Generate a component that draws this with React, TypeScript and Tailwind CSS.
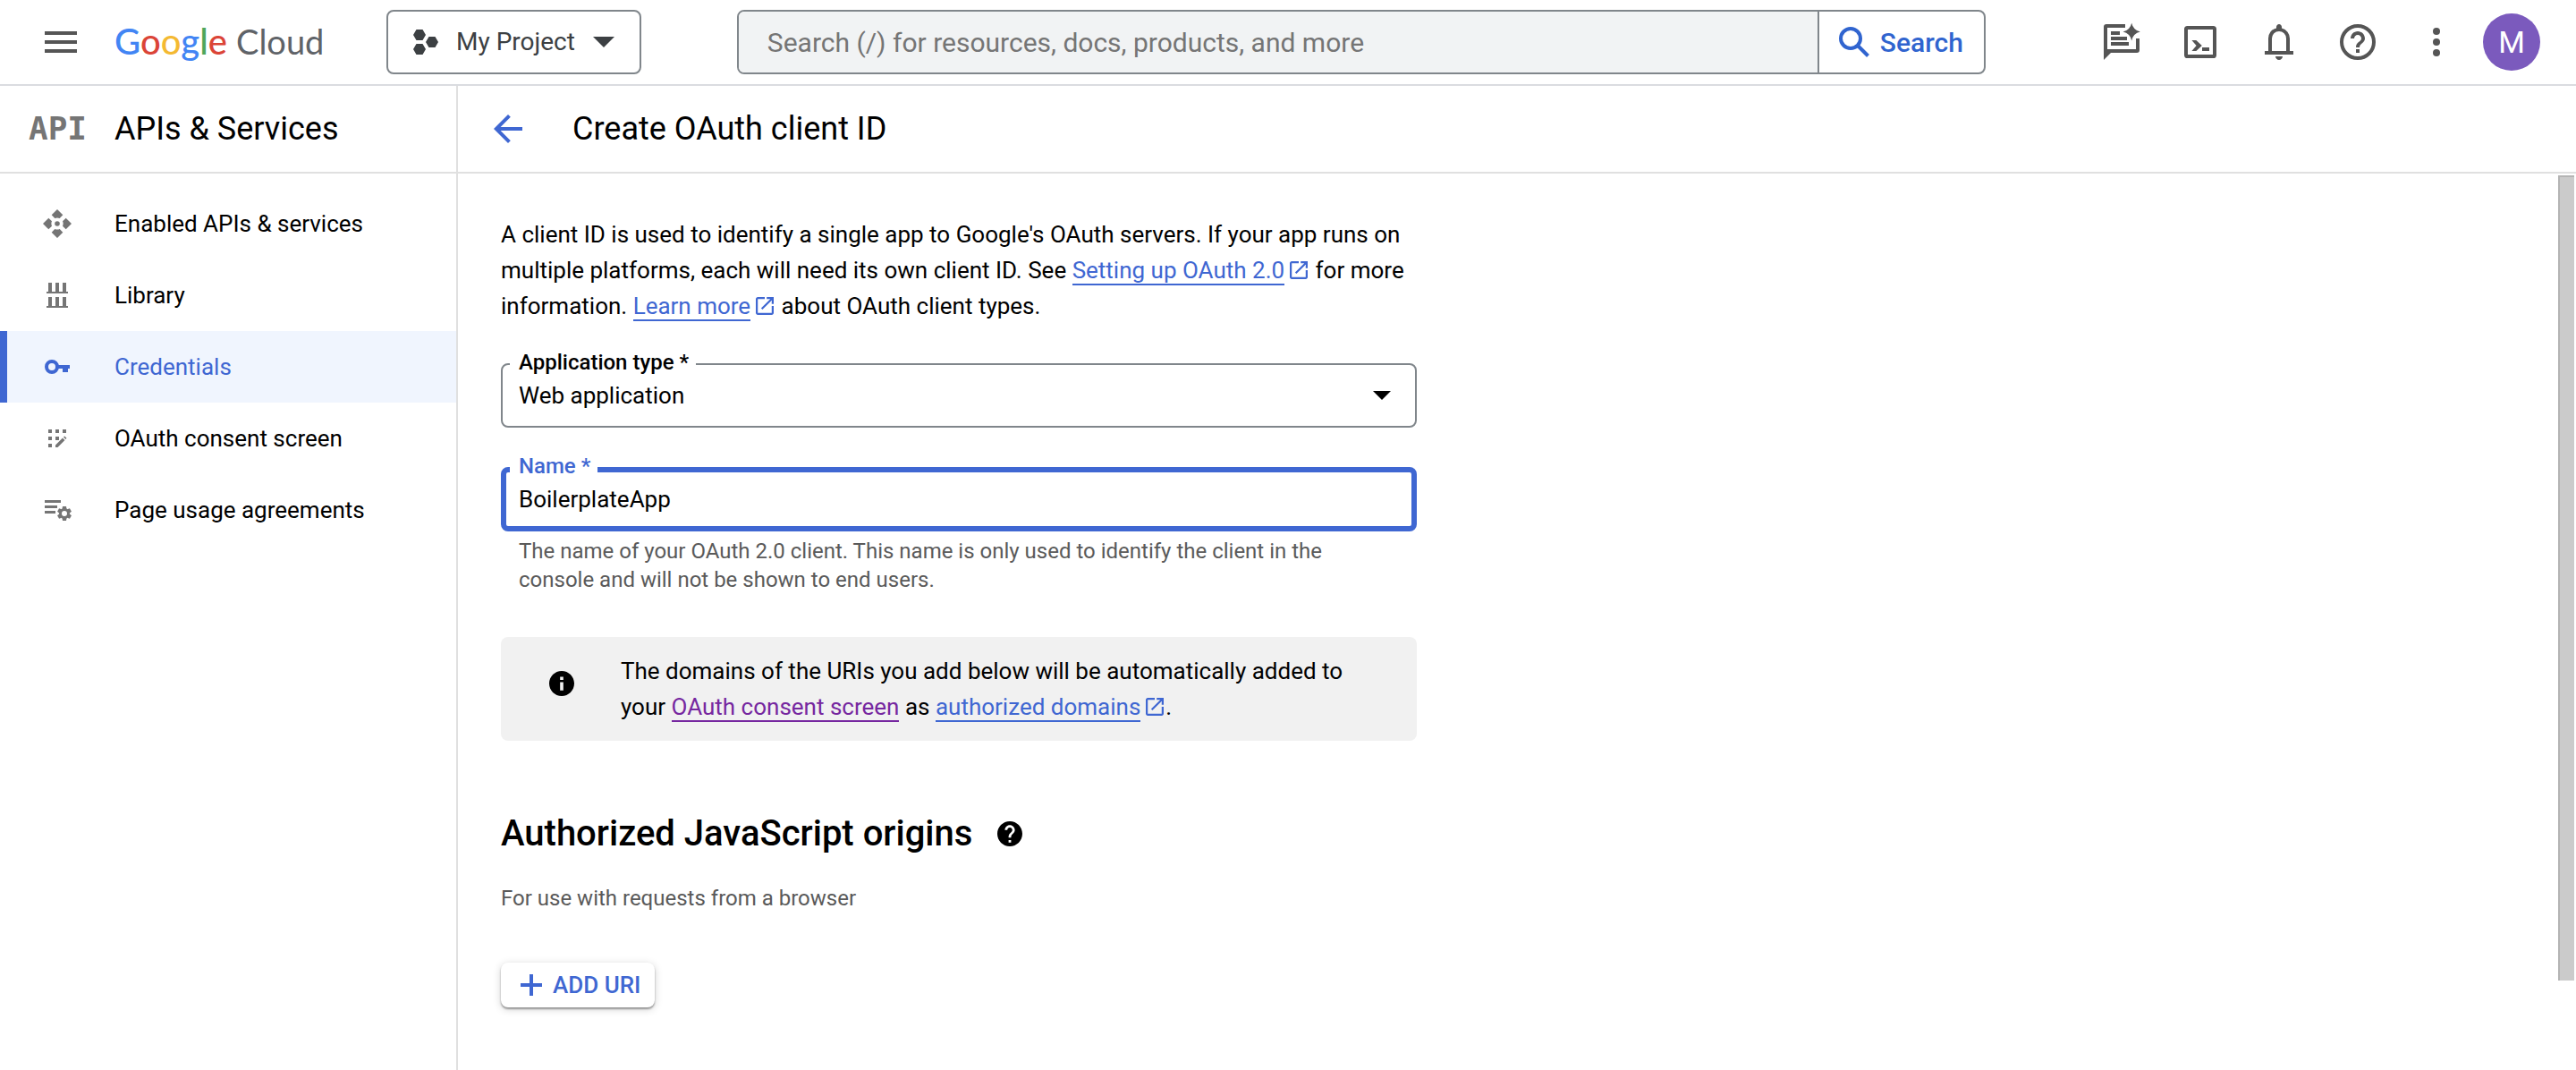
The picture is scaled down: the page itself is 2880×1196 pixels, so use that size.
import React from "react";

type IconProps = { className?: string };

const MenuIcon = () => (
  <svg viewBox="0 0 24 24" className="size-12" fill="currentColor" aria-hidden="true">
    <path d="M3 6h18v2H3zM3 11h18v2H3zM3 16h18v2H3z" />
  </svg>
);

const ProjectIcon = () => (
  <svg viewBox="0 0 28 28" className="size-7 shrink-0" fill="currentColor" aria-hidden="true">
    <path d="M3.5 0h7L14 6l-3.500 6h-7L0 6zM17.500 8h7L28 14l-3.500 6h-7L14 14zM3.500 16h7L14 22l-3.500 6h-7L0 22z" />
  </svg>
);

const CaretIcon = ({ className }: IconProps) => (
  <svg viewBox="0 0 20 10" className={className} fill="currentColor" preserveAspectRatio="none" aria-hidden="true">
    <path d="M0 0h20L10 10z" />
  </svg>
);

const SearchIcon = () => (
  <svg viewBox="0 0 34 34" className="size-[34px] shrink-0" fill="none" stroke="currentColor" strokeWidth="4" aria-hidden="true">
    <circle cx="13" cy="13" r="11" />
    <path d="M20.500 20.500 32.500 32.500" />
  </svg>
);

const FeedbackSparkIcon = () => (
  <svg viewBox="0 0 24 24" className="size-12" fill="currentColor" aria-hidden="true">
    <path d="M14 2H3.500A1.500 1.500 0 0 0 2 3.500V22l4-4h14.500a1.500 1.500 0 0 0 1.500-1.500V10h-2v6H4V4h10z" />
    <path d="M6 6h5v2H6zM6 9h9v2H6zM6 12h10v2H6z" />
    <path d="M17.600 1.400 Q18.500 5.400 22.400 6.300 Q18.500 7.200 17.600 11.200 Q16.700 7.200 12.800 6.300 Q16.700 5.400 17.600 1.400z" />
  </svg>
);

const TerminalIcon = () => (
  <svg viewBox="0 0 24 24" className="size-12" fill="currentColor" aria-hidden="true">
    <rect x="4" y="4" width="16" height="16" rx="0.800" fill="none" stroke="currentColor" strokeWidth="2" />
    <path d="M7.200 11h2.500l3.200 3-3.200 3H7.200l2.600-3zM13 15h4v2h-4z" />
  </svg>
);

const BellIcon = () => (
  <svg viewBox="0 0 24 24" className="size-12" fill="currentColor" aria-hidden="true">
    <path d="M4 19v-2h2v-7q0-2.075 1.250-3.688T10.500 4.200v-.7q0-.625.438-1.062T12 2q.625 0 1.063.438T13.500 3.500v.7q2 .5 3.250 2.113T18 10v7h2v2Zm8 3q-.825 0-1.412-.587T10 20h4q0 .825-.587 1.413T12 22Zm-4-5h8v-7q0-1.650-1.175-2.825T12 6Q10.350 6 9.175 7.175T8 10Z" />
  </svg>
);

const HelpOutlineIcon = () => (
  <svg viewBox="0 0 24 24" className="size-12" fill="currentColor" aria-hidden="true">
    <circle cx="12" cy="12" r="9" fill="none" stroke="currentColor" strokeWidth="2" />
    <path d="M11 16h2v2h-2zM12 6c-2.210 0-4 1.790-4 4h2c0-1.100.9-2 2-2s2 .9 2 2c0 2-3 1.750-3 5h2c0-2.250 3-2.500 3-5 0-2.210-1.790-4-4-4z" />
  </svg>
);

const MoreIcon = () => (
  <svg viewBox="0 0 24 24" className="size-12" fill="currentColor" aria-hidden="true">
    <circle cx="12" cy="6" r="2" />
    <circle cx="12" cy="12" r="2" />
    <circle cx="12" cy="18" r="2" />
  </svg>
);

const BackIcon = () => (
  <svg viewBox="0 0 24 24" className="size-12" fill="currentColor" aria-hidden="true">
    <path d="M20 11H7.830l5.590-5.590L12 4l-8 8 8 8 1.410-1.410L7.830 13H20v-2z" />
  </svg>
);

const ExternalIcon = () => (
  <svg viewBox="3 3 18 18" className="ml-1.5 mr-0.5 inline-block size-5 align-[-1px] text-[#3f67d2]" fill="currentColor" aria-hidden="true">
    <path d="M5 21q-.825 0-1.413-.587T3 19V5q0-.825.588-1.413T5 3h7v2H5v14h14v-7h2v7q0 .825-.587 1.413T19 21H5Zm4.700-5.300l-1.400-1.400L17.600 5H14V3h7v7h-2V6.400l-9.300 9.300Z" />
  </svg>
);

const InfoIcon = () => (
  <svg viewBox="2 2 20 20" className="size-7 shrink-0" fill="currentColor" aria-hidden="true">
    <path d="M12 2C6.480 2 2 6.480 2 12s4.480 10 10 10 10-4.480 10-10S17.520 2 12 2zm1.300 15.500h-2.600V11h2.600v6.500zm0-8.300h-2.600V6.600h2.600v2.600z" />
  </svg>
);

const HelpFilledIcon = () => (
  <svg viewBox="2 2 20 20" className="size-7" fill="currentColor" aria-hidden="true">
    <path d="M12 2C6.480 2 2 6.480 2 12s4.480 10 10 10 10-4.480 10-10S17.520 2 12 2zm1 17h-2v-2h2v2zm2.070-7.750l-.9.920C13.450 12.900 13 13.500 13 15h-2v-.5c0-1.100.450-2.100 1.170-2.830l1.240-1.260c.370-.360.590-.860.590-1.410 0-1.100-.9-2-2-2s-2 .9-2 2H8c0-2.210 1.790-4 4-4s4 1.790 4 4c0 .880-.360 1.680-.930 2.250z" />
  </svg>
);

const PlusIcon = () => (
  <svg viewBox="0 0 24 24" className="size-6 shrink-0" fill="currentColor" aria-hidden="true">
    <path d="M10 0h4v10h10v4H14v10h-4V14H0v-4h10z" />
  </svg>
);

const EnabledApisIcon = () => (
  <svg viewBox="0 0 32 32" className="size-8" fill="currentColor" aria-hidden="true">
    {[0, 90, 180, 270].map((angle) => (
      <path key={angle} transform={`rotate(${angle} 16 16)`} d="M16 0l6.300 6.300-3.600 3.700a6.500 6.500 0 0 0-5.400 0L9.700 6.300z" />
    ))}
    <circle cx="16" cy="16" r="2.800" />
  </svg>
);

const LibraryIcon = () => (
  <svg viewBox="0 0 32 32" className="size-8" fill="currentColor" aria-hidden="true">
    <path d="M6 2h4v10h4V2h4v10h4V2h4v10h2v2H4v-2h2zM6 18h4v10h4V18h4v10h4V18h4v10h2v2H4v-2h2z" />
  </svg>
);

const KeyIcon = () => (
  <svg viewBox="0 0 32 32" className="size-8" fill="currentColor" aria-hidden="true">
    <circle cx="10" cy="16" r="6" fill="none" stroke="currentColor" strokeWidth="4" />
    <path d="M17 14h13v4h-2v4h-6v-4h-5z" />
  </svg>
);

const ConsentIcon = () => (
  <svg viewBox="0 0 32 32" className="size-8" fill="currentColor" aria-hidden="true">
    <path d="M6 6h4v4H6zM14 6h4v4h-4zM22 6h4v4h-4zM6 14h4v4H6zM14 14h4v4h-4zM6 22h4v4H6z" />
    <path d="M14 26v-2.500l8-8 2.500 2.500-8 8zM23 14.600l1.200-1.100 2.300 2.300-1.200 1.200z" />
  </svg>
);

const AgreementsIcon = () => (
  <svg viewBox="0 0 32 32" className="size-8" fill="currentColor" aria-hidden="true">
    <path d="M2 5h18v3H2zM2 11h14v3H2zM2 17h12v3H2z" />
    <circle cx="24" cy="20" r="4.500" fill="none" stroke="currentColor" strokeWidth="3" />
    {[0, 60, 120, 180, 240, 300].map((angle) => (
      <path key={angle} transform={`rotate(${angle} 24 20)`} d="M22 12h4l.5 3h-5z" />
    ))}
  </svg>
);

const navItems = [
  { label: "Enabled APIs & services", Icon: EnabledApisIcon },
  { label: "Library", Icon: LibraryIcon },
  { label: "Credentials", Icon: KeyIcon, active: true },
  { label: "OAuth consent screen", Icon: ConsentIcon },
  { label: "Page usage agreements", Icon: AgreementsIcon },
];

const tools = [
  { label: "Send feedback", Icon: FeedbackSparkIcon },
  { label: "Activate Cloud Shell", Icon: TerminalIcon },
  { label: "Notifications", Icon: BellIcon },
  { label: "Support", Icon: HelpOutlineIcon },
  { label: "More options", Icon: MoreIcon },
];

function Logo() {
  return (
    <a href="#" aria-label="Google Cloud" className="ml-9 flex w-[236px] items-baseline gap-2.5 whitespace-nowrap pb-0.5 font-['Lato'] text-[40px] leading-12">
      <span className="font-medium">
        <span className="text-[#4285f4]">G</span>
        <span className="text-[#db4437]">o</span>
        <span className="text-[#f4b932]">o</span>
        <span className="text-[#4285f4]">g</span>
        <span className="text-[#4fa65a]">l</span>
        <span className="text-[#db4437]">e</span>
      </span>
      <span className="text-[38px] text-[#5f6368]">Cloud</span>
    </a>
  );
}

function Header() {
  return (
    <header className="flex h-24 items-center border-b-2 border-[#dadce0] pl-11 pr-10 text-[#555]">
      <button aria-label="Main menu"><MenuIcon /></button>
      <Logo />
      <button className="ml-[68px] flex h-[72px] items-center rounded-lg border-2 border-[#80868b] px-7 text-[28px] text-[#3c4043]">
        <ProjectIcon />
        <span className="ml-5 mr-5 whitespace-nowrap">My Project</span>
        <CaretIcon className="h-3 w-6" />
      </button>
      <form className="ml-[107px] flex h-[72px] w-[1396px] overflow-hidden rounded-lg border-2 border-[#80868b]">
        <input
          aria-label="Search"
          placeholder="Search (/) for resources, docs, products, and more"
          className="min-w-0 flex-1 bg-[#f1f3f4] px-8 text-[30px] outline-none placeholder:text-[#757575]"
        />
        <button type="button" className="flex w-[186px] items-center gap-3 border-l-2 border-[#80868b] pl-[22px] text-[30px] font-medium text-[#3064cf]">
          <SearchIcon />
          Search
        </button>
      </form>
      <div className="ml-auto flex items-center gap-10">
        {tools.map(({ label, Icon }) => (
          <button key={label} aria-label={label}><Icon /></button>
        ))}
      </div>
      <button aria-label="Account" className="ml-7 size-16 rounded-full bg-[#7b5abd] text-[34px] text-white">M</button>
    </header>
  );
}

function Sidebar() {
  return (
    <aside className="w-[512px] shrink-0 border-r-2 border-[#e0e0e0]">
      <div className="flex h-[98px] items-center border-b-2 border-[#e0e0e0]">
        <div aria-hidden="true" className="ml-8 w-24 font-['DejaVu_Sans_Mono'] text-4xl font-bold text-[#757575]">API</div>
        <h2 className="text-4xl">APIs &amp; Services</h2>
      </div>
      <nav className="pt-4">
        {navItems.map(({ label, Icon, active }) => (
          <a
            key={label}
            href="#"
            aria-current={active ? "page" : undefined}
            className={
              active
                ? "flex h-20 items-center gap-12 border-l-8 border-[#3f67d2] bg-[#f0f5fe] pl-10 text-[#3f67d2]"
                : "flex h-20 items-center gap-12 pl-12 text-black"
            }
          >
            <span className={active ? "" : "text-[#757575]"}><Icon /></span>
            {label}
          </a>
        ))}
      </nav>
    </aside>
  );
}

function TextLink({ children, visited }: { children: React.ReactNode; visited?: boolean }) {
  return (
    <a href="#" className={visited ? "border-b-2 border-[#7627a0] text-[#7627a0]" : "border-b-2 border-[#3f67d2] text-[#3f67d2]"}>
      {children}
    </a>
  );
}

function ClientForm() {
  return (
    <div className="w-full max-w-[1024px]">
      <p className="leading-10">
        A client ID is used to identify a single app to Google's OAuth servers. If your app runs on multiple
        platforms, each will need its own client ID. See <TextLink>Setting up OAuth 2.0</TextLink>
        <ExternalIcon /> for more information. <TextLink>Learn more</TextLink>
        <ExternalIcon /> about OAuth client types.
      </p>

      <div className="relative mt-11">
        <label htmlFor="app-type" className="absolute -top-[17px] left-2.5 bg-white pl-2.5 pr-2 text-2xl leading-8 font-medium">
          Application type *
        </label>
        <select id="app-type" className="block h-[72px] w-full appearance-none rounded-lg border-2 border-[#80868b] bg-transparent px-[18px] outline-none">
          <option>Web application</option>
        </select>
        <CaretIcon className="pointer-events-none absolute right-[29px] top-[31px] h-2.5 w-5" />
      </div>

      <div className="relative mt-11">
        <label htmlFor="client-name" className="absolute -top-[17px] left-2.5 bg-white pl-2.5 pr-2 text-2xl leading-8 font-medium text-[#3f67d2]">
          Name *
        </label>
        <input
          id="client-name"
          defaultValue="BoilerplateApp"
          aria-describedby="client-name-hint"
          className="block h-[72px] w-full rounded-lg border-6 border-[#3f67d2] px-3.5 outline-none"
        />
      </div>
      <p id="client-name-hint" className="mt-1.5 px-5 text-2xl leading-8 text-[#5a5a5a]">
        The name of your OAuth 2.0 client. This name is only used to identify the client in the console and
        will not be shown to end users.
      </p>

      <div className="mt-12 flex rounded-lg bg-[#f1f1f1] py-[18px] pl-[54px] pr-16 leading-10">
        <span className="mr-[52px] mt-5"><InfoIcon /></span>
        <p>
          The domains of the URIs you add below will be automatically added to your{" "}
          <TextLink visited>OAuth consent screen</TextLink> as <TextLink>authorized domains</TextLink>
          <ExternalIcon />.
        </p>
      </div>

      <div className="mt-20 flex items-center gap-7">
        <h3 className="text-[40px] leading-12 font-medium">Authorized JavaScript origins</h3>
        <button aria-label="Help"><HelpFilledIcon /></button>
      </div>
      <p className="mt-8 text-2xl leading-8 text-[#5a5a5a]">For use with requests from a browser</p>

      <button className="mt-14 flex h-[50px] items-center gap-3 rounded-lg bg-white pl-[22px] pr-4 font-medium text-[#3f67d2] shadow-[0_2px_2px_rgba(0,0,0,0.35),0_2px_10px_rgba(0,0,0,0.18)]">
        <PlusIcon />
        ADD URI
      </button>
    </div>
  );
}

export default function App() {
  return (
    <div className="flex min-h-screen flex-col bg-white font-['Roboto',sans-serif] text-[26px] text-black">
      <Header />
      <div className="flex flex-1">
        <Sidebar />
        <div className="flex min-w-0 flex-1 flex-col">
          <div className="flex h-[98px] items-center gap-12 border-b-2 border-[#e0e0e0] pl-8">
            <button aria-label="Back" className="text-[#3f67d2]"><BackIcon /></button>
            <h1 className="text-4xl">Create OAuth client ID</h1>
          </div>
          <div className="flex flex-1 justify-between">
            <main className="flex-1 px-12 py-12">
              <ClientForm />
            </main>
            <div className="flex w-5 pt-0.5 pr-0.5" aria-hidden="true">
              <div className="h-[90%] w-full border-l-2 border-t-2 border-[#b4b4b4] bg-[#cbcbcb]" />
            </div>
          </div>
        </div>
      </div>
    </div>
  );
}
